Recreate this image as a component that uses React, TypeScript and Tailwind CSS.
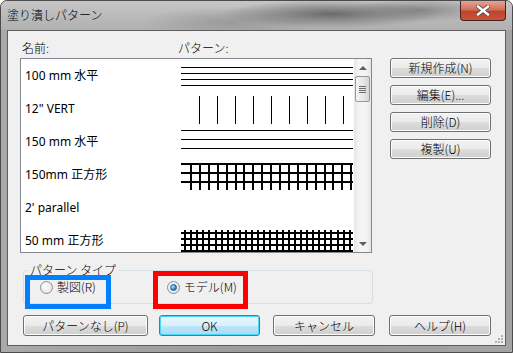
import React from "react";

const font = "font-['Noto_Sans','Noto_Sans_CJK_JP',sans-serif]";
const uiFont = "font-['Noto_Sans_CJK_JP',sans-serif] font-light";

const rows = [
  { name: "100 mm 水平", kind: "h4" },
  { name: '12" VERT', kind: "v" },
  { name: "150 mm 水平", kind: "h3" },
  { name: "150mm 正方形", kind: "grid" },
  { name: "2' parallel", kind: "none" },
  { name: "50 mm 正方形", kind: "fine" },
];

function Pattern({ kind }: { kind: string }) {
  const W = 172;
  const lines: any[] = [];
  if (kind === "h4") {
    [8, 14, 20, 26].forEach((y) => lines.push(<line key={y} x1={0} x2={W} y1={y + 0.5} y2={y + 0.5} />));
  }
  if (kind === "v") {
    for (let i = 1; i <= 9; i++) lines.push(<line key={i} x1={18 * i + 0.5} x2={18 * i + 0.5} y1={4} y2={32} />);
  }
  if (kind === "h3") {
    [5, 14, 23].forEach((y) => lines.push(<line key={y} x1={0} x2={W} y1={y + 0.5} y2={y + 0.5} />));
  }
  if (kind === "grid") {
    [5, 14, 23].forEach((y) => lines.push(<line key={"h" + y} x1={0} x2={W} y1={y + 1} y2={y + 1} strokeWidth={2} />));
    for (let i = 0; i < 19; i++) {
      const x = Math.round(10 + 8.9 * i);
      lines.push(<line key={"v" + i} x1={x} x2={x} y1={5} y2={32} strokeWidth={2} />);
    }
  }
  if (kind === "fine") {
    [8, 14, 20, 26].forEach((y) => lines.push(<line key={"h" + y} x1={0} x2={W} y1={y + 1} y2={y + 1} strokeWidth={2} />));
    for (let i = 0; i < 28; i++) {
      const x = Math.round(4 + 6.1 * i);
      lines.push(<line key={"v" + i} x1={x} x2={x} y1={6} y2={34} strokeWidth={2} />);
    }
  }
  return (
    <svg width={W} height={33} className="shrink-0" stroke="#000" strokeWidth={1} shapeRendering="crispEdges">
      {lines}
    </svg>
  );
}

function Btn({ label, w, focus }: { label: string; w: string; focus?: boolean }) {
  return (
    <div
      className={`${w} flex items-center justify-center rounded-[3px] border text-[12px] text-black ${
        focus
          ? "border-[#3c7fb1] shadow-[inset_0_0_0_1px_#48d7f7] bg-[linear-gradient(#eaf6fd_0%,#d9f0fc_50%,#bee6fd_51%,#a7d9f5_100%)]"
          : "border-[#707070] shadow-[inset_0_0_0_1px_#fcfcfc] bg-[linear-gradient(#f2f2f2_0%,#ebebeb_50%,#dddddd_51%,#cfcfcf_100%)]"
      }`}
    >
      {label}
    </div>
  );
}

function Radio({ checked }: { checked?: boolean }) {
  return (
    <div className="w-[13px] h-[13px] rounded-full border border-[#8f8f8f] bg-[radial-gradient(circle_at_40%_40%,#ffffff,#dcdcdc)] flex items-center justify-center shrink-0">
      {checked && (
        <div className="w-[7px] h-[7px] rounded-full border border-[#1c5a8c] bg-[radial-gradient(circle_at_35%_35%,#b8e4fb,#2a8ad4_60%,#0d4f88)]" />
      )}
    </div>
  );
}

export default function App() {
  return (
    <div className={`${uiFont} w-[513px] h-[353px] flex flex-col rounded-t-[7px] border border-[#4b4b4b] overflow-hidden bg-[linear-gradient(90deg,#a9a9a9,#9c9c9c_50%,#a4a4a4)]`}>
      {/* title bar */}
      <div className="h-[29px] flex items-start shrink-0 bg-[radial-gradient(ellipse_110px_14px_at_330px_13px,#6a6a6a,transparent),radial-gradient(ellipse_70px_12px_at_420px_9px,#8a8a8a,transparent),radial-gradient(ellipse_90px_16px_at_230px_22px,#9a9a9a,transparent),linear-gradient(#c6c6c6,#b0b0b0)]">
        <div className="pl-[6px] pt-[6px] text-[12px] leading-[16px] text-black">塗り潰しパターン</div>
        <div className="ml-auto mr-[6px] w-[46px] h-[20px] rounded-b-[4px] border border-t-0 border-[#4a2020] bg-[linear-gradient(#e8a493,#d2705a_45%,#c0442c_55%,#c7543a)] flex items-center justify-center">
          <svg width="14" height="11" viewBox="0 0 14 11">
            <path d="M2 1.5 L12 9.5 M12 1.5 L2 9.5" stroke="#4a4a4a" strokeWidth="4" strokeLinecap="square" />
            <path d="M2 1.5 L12 9.5 M12 1.5 L2 9.5" stroke="#ffffff" strokeWidth="2.4" strokeLinecap="square" />
          </svg>
        </div>
      </div>

      {/* body with side frames */}
      <div className="flex-1 flex px-[6px] pb-[6px]">
        <div className="relative flex-1 flex flex-col bg-[#f0f0f0] border border-[#5e5e5e]">
          <div className="flex h-[222px]">
            <div className="ml-[12px] w-[352px] flex flex-col">
              <div className="h-[27px] pt-[10px] flex text-[12px] leading-[14px] text-black">
                <span className="ml-[2px] w-[156px]">名前:</span>
                <span>パターン:</span>
              </div>
              <div className="h-[195px] border border-[#828790] bg-white flex overflow-hidden">
                <div className={`${font} font-normal flex-1 flex flex-col text-[12px] text-black`}>
                  {rows.map((r) => (
                    <div key={r.name} className="h-[33px] shrink-0 flex items-center">
                      <span className="w-[160px] pl-[4px] shrink-0">{r.name}</span>
                      <Pattern kind={r.kind} />
                    </div>
                  ))}
                </div>
                <div className="w-[17px] shrink-0 bg-[linear-gradient(90deg,#e6e6e6,#f4f4f4_30%,#f4f4f4_70%,#e6e6e6)] flex flex-col items-center">
                  <div className="h-[17px] flex items-center justify-center">
                    <div className="w-0 h-0 border-x-[4px] border-x-transparent border-b-[4px] border-b-[#5d5d5d]" />
                  </div>
                  <div className="w-[15px] h-[26px] rounded-[2px] border border-[#989898] bg-[linear-gradient(90deg,#f3f3f3,#e8e8e8_50%,#d6d6d6)] flex flex-col items-center justify-center gap-[1px]">
                    <div className="w-[7px] h-[1px] bg-[#6e6e6e]" />
                    <div className="w-[7px] h-[1px] bg-[#6e6e6e]" />
                    <div className="w-[7px] h-[1px] bg-[#6e6e6e]" />
                    <div className="w-[7px] h-[1px] bg-[#6e6e6e]" />
                  </div>
                  <div className="mt-auto h-[17px] flex items-center justify-center">
                    <div className="w-0 h-0 border-x-[4px] border-x-transparent border-t-[4px] border-t-[#5d5d5d]" />
                  </div>
                </div>
              </div>
            </div>
            <div className="ml-[18px] pt-[27px] flex flex-col gap-[7px]">
              <Btn label="新規作成(N)" w="w-[101px] h-[20px]" />
              <Btn label="編集(E)..." w="w-[101px] h-[20px]" />
              <Btn label="削除(D)" w="w-[101px] h-[20px]" />
              <Btn label="複製(U)" w="w-[101px] h-[20px]" />
            </div>
          </div>

          {/* group box */}
          <div className="relative mt-[10px] ml-[15px] w-[350px] h-[41px]">
            <fieldset className="h-full border border-[#d5dfe5] rounded-[3px] px-0">
              <legend className="ml-[4px] px-[2px] text-[12px] leading-[14px] text-black">パターン タイプ</legend>
              <div className="flex items-center h-[20px] text-[12px] text-black">
                <div className="ml-[16px] flex items-center gap-[4px]">
                  <Radio />
                  <span>製図(R)</span>
                </div>
                <div className="ml-[71px] flex items-center gap-[4px]">
                  <Radio checked />
                  <span>モデル(M)</span>
                </div>
              </div>
            </fieldset>
            <div className="absolute left-[2px] top-[12px] w-[86px] h-[34px] border-[5px] border-[#0080ff]" />
            <div className="absolute left-[130px] top-[8px] w-[95px] h-[38px] border-[5px] border-[#ff0000]" />
          </div>

          {/* bottom buttons */}
          <div className="mt-[11px] ml-[15px] flex">
            <Btn label="パターンなし(P)" w="w-[125px] h-[21px]" />
            <div className="ml-[11px]">
              <Btn label="OK" w="w-[101px] h-[21px]" focus />
            </div>
            <div className="ml-[13px]">
              <Btn label="キャンセル" w="w-[102px] h-[21px]" />
            </div>
            <div className="ml-[14px]">
              <Btn label="ヘルプ(H)" w="w-[102px] h-[21px]" />
            </div>
          </div>

          {/* resize grip */}
          <div className="absolute right-[2px] bottom-[2px] grid grid-cols-3 gap-[1px]">
            {[0, 0, 1, 0, 1, 1, 1, 1, 1].map((v, i) => (
              <div key={i} className={`w-[2px] h-[2px] ${v ? "bg-[#b0b0b0]" : ""}`} />
            ))}
          </div>
        </div>
      </div>
    </div>
  );
}
